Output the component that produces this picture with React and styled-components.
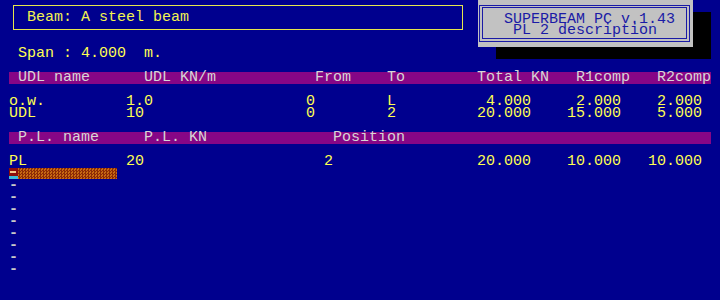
import React from "react";
import styled, { createGlobalStyle } from "styled-components";

const Global = createGlobalStyle`
  html, body { margin: 0; padding: 0; background: #00008e; }
`;

const Screen = styled.div`
  width: 720px;
  height: 300px;
  overflow: hidden;
  background: #00008e;
  font-family: "Liberation Mono", "DejaVu Sans Mono", monospace;
  font-size: 15px;
  line-height: 12px;
  color: #ffff52;
  display: flex;
  flex-direction: column;
`;

const Top = styled.div`
  display: flex;
  align-items: flex-start;
  height: 48px;
  flex-shrink: 0;
`;

const TitleBox = styled.div`
  margin: 5px 0 0 13px;
  width: 450px;
  height: 25px;
  box-sizing: border-box;
  border: 1px solid #e6e64c;
  padding: 6px 0 0 13px;
  white-space: pre;
  color: #f2f250;
`;

const LogoBox = styled.div`
  margin-left: 15px;
  width: 215px;
  height: 47px;
  box-sizing: border-box;
  background: #c2c2c2;
  box-shadow: 18px 12px 0 #000;
  padding: 5px 3px 5px 1px;
`;

const OuterFrame = styled.div`
  height: 100%;
  box-sizing: border-box;
  border: 1px solid #1a1aa6;
  padding: 1px 2px 2px 2px;
`;

const InnerFrame = styled.div`
  height: 100%;
  box-sizing: border-box;
  border: 1px solid #1a1aa6;
  padding: 6px 0 0 21px;
`;

const LogoText = styled.div`
  white-space: pre;
  line-height: 11px;
  color: #1a1aa6;
`;

const TextLine = styled.div`
  height: 12px;
  white-space: pre;
  margin-left: ${(p) => p.$indent || 0}px;
  margin-top: ${(p) => p.$gap || 0}px;
  color: ${(p) => p.$color || "inherit"};
`;

const HeaderBar = styled.div`
  margin: 12px 0 0 9px;
  width: 702px;
  height: 12px;
  box-sizing: border-box;
  padding-left: 9px;
  background: #860686;
  color: #d6d6d6;
  display: grid;
  grid-template-columns: ${(p) => p.$cols};
`;

const DataRow = styled.div`
  margin: ${(p) => p.$gap || 0}px 0 0 9px;
  width: 693px;
  height: 12px;
  display: grid;
  grid-template-columns: ${(p) => p.$cols};
`;

const Cell = styled.span`
  white-space: pre;
  text-align: ${(p) => (p.$right ? "right" : "left")};
`;

const Progress = styled.div`
  margin-left: 9px;
  height: 12px;
  display: flex;
`;

const Cursor = styled.div`
  position: relative;
  width: 9px;
  height: 12px;
  background: linear-gradient(#8c0c0c 0 8px, #3cbcdc 8px 11px, transparent 11px);
  &::after {
    content: "";
    position: absolute;
    left: 1px;
    top: 3px;
    width: 6px;
    height: 2px;
    background: #f4c890;
  }
`;

const Fill = styled.div`
  width: 99px;
  height: 11px;
  background-color: #c86a12;
  background-image: conic-gradient(#8c2a06 25%, transparent 0 50%, #8c2a06 0 75%, transparent 0);
  background-size: 3px 3px;
`;

const DashList = styled.div`
  display: flex;
  flex-direction: column;
  margin-left: 9px;
`;

const Dash = styled.div`
  height: 12px;
  color: #c8c8c8;
  font-weight: bold;
`;

const udlHead = "126px 171px 72px 90px 99px 81px 54px";
const udlData = "117px 180px 81px 54px 90px 90px 81px";
const plHead = "126px 189px 1fr";
const plData = "117px 198px 117px 90px 90px 81px";

const udlRows = [
  ["o.w.", "1.0", "0", "L", "4.000", "2.000", "2.000"],
  ["UDL", "10", "0", "2", "20.000", "15.000", "5.000"],
];

export default function App() {
  return (
    <>
      <Global />
      <Screen>
        <Top>
          <TitleBox>Beam: A steel beam</TitleBox>
          <LogoBox>
            <OuterFrame>
              <InnerFrame>
                <LogoText>SUPERBEAM PC v.1.43</LogoText>
                <LogoText>{" PL 2 description"}</LogoText>
              </InnerFrame>
            </OuterFrame>
          </LogoBox>
        </Top>
        <TextLine $indent={18}>{"Span : 4.000  m."}</TextLine>

        <HeaderBar $cols={udlHead}>
          {["UDL name", "UDL KN/m", "From", "To", "Total KN", "R1comp", "R2comp"].map((h) => (
            <Cell key={h}>{h}</Cell>
          ))}
        </HeaderBar>
        {udlRows.map((r, i) => (
          <DataRow key={i} $cols={udlData} $gap={i === 0 ? 12 : 0}>
            {r.map((c, j) => (
              <Cell key={j} $right={j >= 4}>
                {c}
              </Cell>
            ))}
          </DataRow>
        ))}

        <HeaderBar $cols={plHead}>
          <Cell>P.L. name</Cell>
          <Cell>P.L. KN</Cell>
          <Cell>Position</Cell>
        </HeaderBar>
        <DataRow $cols={plData} $gap={12}>
          <Cell>PL</Cell>
          <Cell>20</Cell>
          <Cell>2</Cell>
          <Cell $right>20.000</Cell>
          <Cell $right>10.000</Cell>
          <Cell $right>10.000</Cell>
        </DataRow>
        <Progress>
          <Cursor />
          <Fill />
        </Progress>
        <DashList>
          {Array.from({ length: 8 }).map((_, i) => (
            <Dash key={i}>-</Dash>
          ))}
        </DashList>
      </Screen>
    </>
  );
}
